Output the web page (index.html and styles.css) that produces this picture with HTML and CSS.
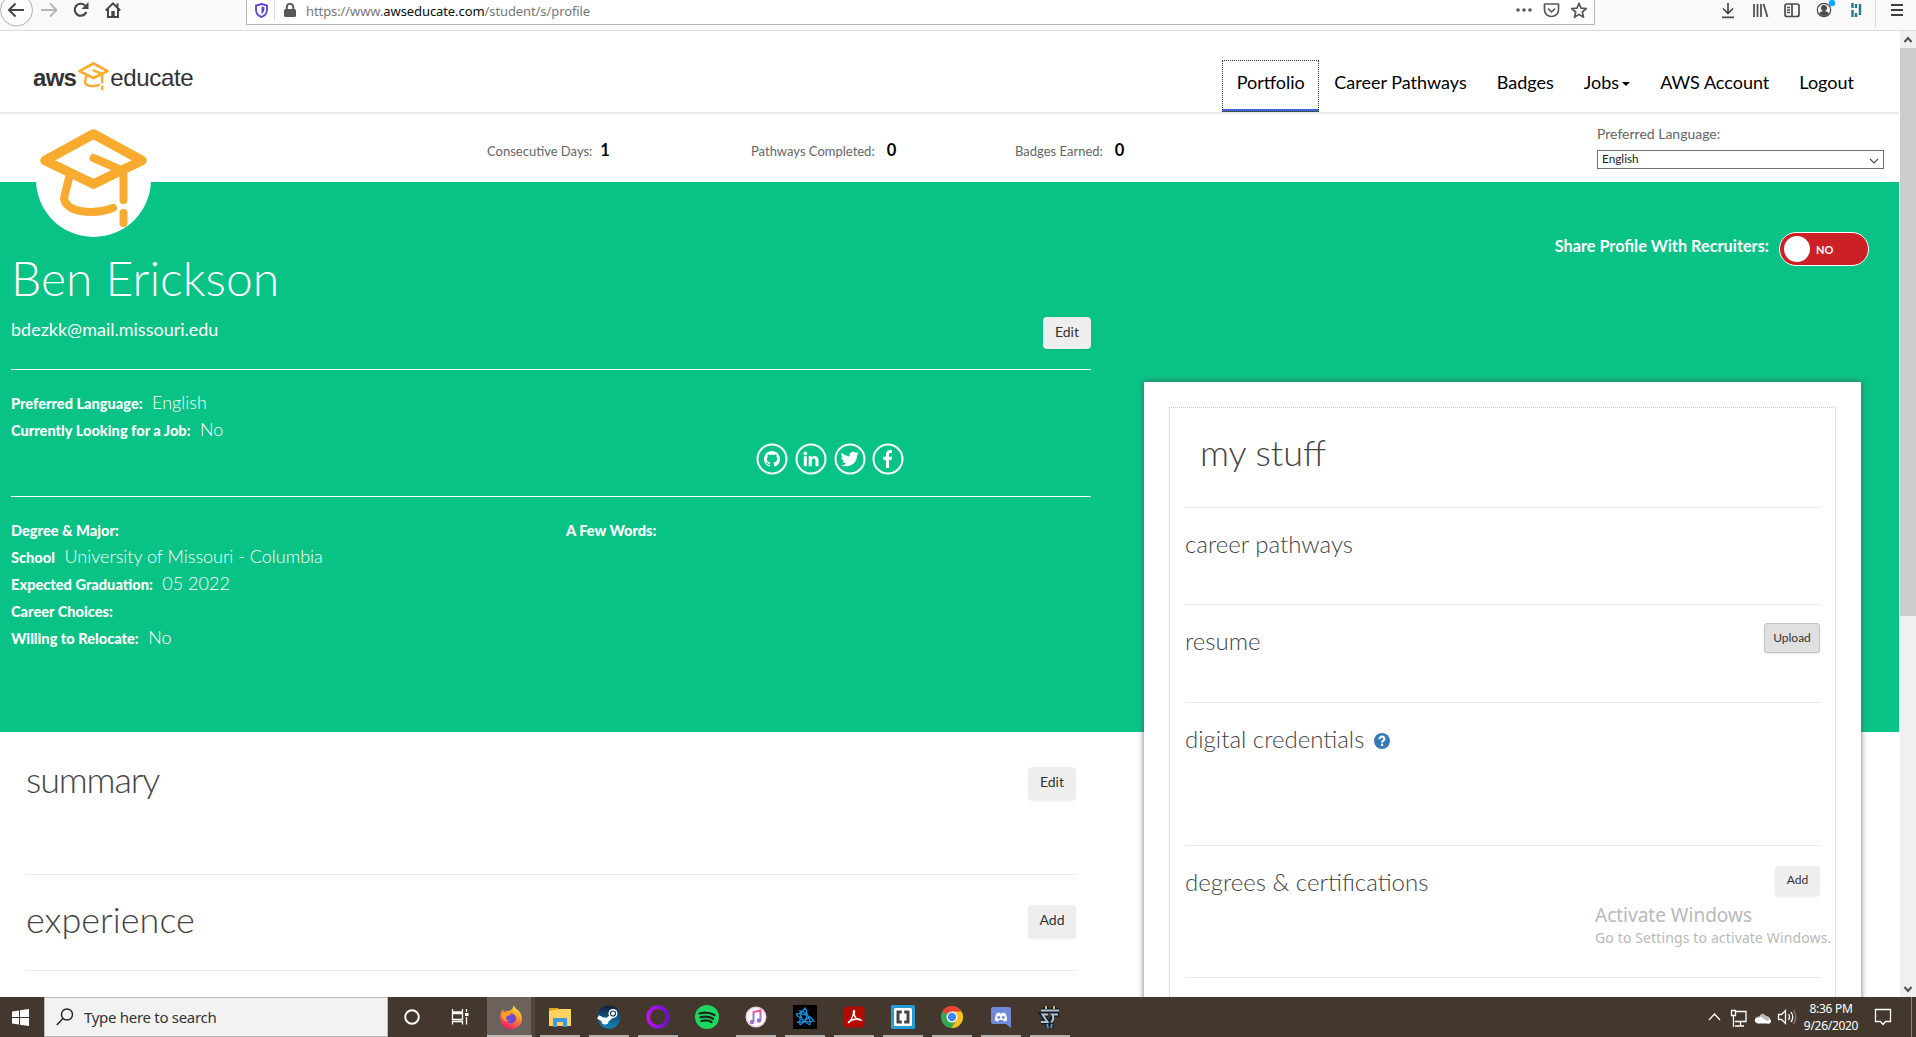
FILE: index.html
```html
<!DOCTYPE html>
<html lang="en">
<head>
<meta charset="utf-8">
<title>AWS Educate - Profile</title>
<link rel="stylesheet" href="styles.css">
</head>
<body>
<svg class="defs" aria-hidden="true">
  <symbol id="cap" viewBox="0 0 107 100">
    <g fill="none" stroke="#f8ab2e" stroke-linecap="round" stroke-linejoin="round">
      <path stroke-width="9.5" d="M53.5 5 5 31.500 53.500 55 102 31.500Z"/>
      <path stroke-width="8" d="M53.500 29 83.500 42V71M83.500 84V94"/>
      <path stroke-width="8" d="M30 45 24 69C26 84 54 86 73 79"/>
    </g>
  </symbol>
</svg>

<header class="chrome">
  <div class="nav-tools">
    <svg class="back" width="34" height="30" viewBox="0 0 34 30"><circle cx="16.500" cy="10" r="16" fill="#fdfdfd" stroke="#b0b0b2"/><path d="M24 10H9M15.500 3.500 9 10l6.500 6.500" fill="none" stroke="#45454a" stroke-width="2"/></svg>
    <svg width="16" height="20" viewBox="0 0 16 20"><path d="M0 10h15M9 3.500 15.500 10 9 16.500" fill="none" stroke="#b6b6b8" stroke-width="2"/></svg>
    <svg width="16" height="20" viewBox="0 0 16 20"><path d="M13.300 12A6 6 0 1 1 12 5.500" fill="none" stroke="#45454a" stroke-width="2.200"/><path d="M15.500 2v7h-7z" fill="#45454a"/></svg>
    <svg width="16" height="20" viewBox="0 0 16 20"><path d="M.8 10.500 8 3.300l7.200 7.200M3 9v8h10V9M12.500 7V3.500" fill="none" stroke="#45454a" stroke-width="2"/><path d="M6.300 11h3.400v6H6.300z" fill="#45454a"/></svg>
  </div>
  <div class="urlbar">
    <svg width="13" height="15" viewBox="0 0 13 15"><path d="M6.500 1 12 2.500v4C12 10 9.500 13 6.500 14 3.500 13 1 10 1 6.500v-4z" fill="#fff" stroke="#6048d8" stroke-width="1.900"/><path d="M6.500 3.500 9.500 4.300C9.600 8 8.500 10 6.500 11z" fill="#5b45d8"/></svg>
    <i class="divider"></i>
    <svg width="12" height="14" viewBox="0 0 12 14"><rect y="6" width="12" height="8" rx="1.500" fill="#58585a"/><path d="M2.800 7V4a3.200 3.200 0 0 1 6.400 0v3" fill="none" stroke="#58585a" stroke-width="2"/></svg>
    <span class="url">https://www.<b>awseducate.com</b>/student/s/profile</span>
    <svg class="page-actions" width="74" height="20" viewBox="0 0 74 20"><g fill="#58585a"><circle cx="3" cy="10" r="1.800"/><circle cx="9" cy="10" r="1.800"/><circle cx="15" cy="10" r="1.800"/></g><path d="M29.500 4h14v6a7 6.500 0 0 1-14 0zM33 8.500l3.500 3.500L40 8.500M64 3.200l2 4.900 5.300.4-4 3.500 1.200 5.200-4.500-2.800-4.500 2.800 1.200-5.200-4-3.500 5.300-.4z" fill="none" stroke="#58585a" stroke-width="1.700" stroke-linejoin="round"/></svg>
  </div>
  <svg class="ext" width="192" height="30" viewBox="0 0 192 30">
    <g fill="none" stroke="#4a4a4f" stroke-width="1.700"><path d="M8 3v10M3 8.500 8 13.500l5-5M2 17.300h12M34 4v13M37.500 4v13M41 4v13M43.500 4l4 13"/><rect x="65" y="4" width="14" height="12.500" rx="2"/><path d="M72 4v13M67 7.500h3M67 10h3M67 12.500h3"/><circle cx="104" cy="10" r="6.700" stroke-width="1.200"/></g>
    <circle cx="104" cy="8" r="3" fill="#4a4a4f"/><path d="M99 14c1-4 9-4 10 0q-5 4-10 0" fill="#4a4a4f"/>
    <circle cx="112" cy="3" r="3.200" fill="#00a8ff"/>
    <path d="M132.500 3v5M132.500 10v7M136 4v4M136 13v4M140 4v11" stroke="#277a8c" stroke-width="2.400"/>
    <path d="M155.500 0v27" stroke="#d7d7d8"/><path d="M171 5h12M171 10h12M171 15h12" stroke="#3f3f43" stroke-width="2"/>
  </svg>
</header>

<div class="viewport">
  <div class="page">
    <header class="site">
      <div class="logo"><b>aws</b><svg width="37" height="29"><use href="#cap"/></svg><span>educate</span></div>
      <nav>
        <a class="active">Portfolio</a><a>Career Pathways</a><a>Badges</a><a>Jobs<i class="caret"></i></a><a>AWS Account</a><a>Logout</a>
      </nav>
    </header>
    <section class="stats">
      <div class="avatar"><svg width="107" height="100"><use href="#cap"/></svg></div>
      <div class="stat">Consecutive Days:<b>1</b></div>
      <div class="stat">Pathways Completed:<b class="wide">0</b></div>
      <div class="stat">Badges Earned:<b class="wide">0</b></div>
      <div class="lang">
        <label>Preferred Language:</label>
        <div class="select">English<svg width="10" height="6" viewBox="0 0 10 6"><path d="M1 .8 5 4.800 9 .8" fill="none" stroke="#444" stroke-width="1.200"/></svg></div>
      </div>
    </section>
    <section class="hero">
      <div class="profile">
        <h1>Ben Erickson</h1>
        <div class="mail-row"><span>bdezkk@mail.missouri.edu</span><button>Edit</button></div>
        <div class="prefs">
          <p><b>Preferred Language:</b>English</p>
          <p><b>Currently Looking for a Job:</b>No</p>
          <div class="social">
            <svg viewBox="0 0 32 32"><circle cx="16" cy="16" r="14.500"/><path class="f" transform="translate(8 8)" d="M8 0C3.580 0 0 3.580 0 8c0 3.540 2.290 6.530 5.470 7.590.4.070.55-.17.55-.38 0-.19-.01-.82-.01-1.490-2.010.37-2.530-.49-2.690-.94-.09-.23-.48-.94-.82-1.130-.28-.15-.68-.52-.01-.53.63-.01 1.080.58 1.230.82.72 1.210 1.870.87 2.330.66.070-.52.28-.87.51-1.070-1.780-.2-3.640-.89-3.640-3.950 0-.87.31-1.590.82-2.150-.08-.2-.36-1.020.08-2.120 0 0 .67-.21 2.200.82.64-.18 1.320-.27 2-.27.68 0 1.360.09 2 .27 1.530-1.040 2.200-.82 2.200-.82.44 1.100.16 1.920.08 2.120.51.56.82 1.270.82 2.150 0 3.070-1.870 3.750-3.650 3.950.29.25.54.73.54 1.480 0 1.070-.01 1.930-.01 2.200 0 .21.15.46.55.38A8.013 8.013 0 0 0 16 8c0-4.420-3.580-8-8-8z"/></svg>
            <svg viewBox="0 0 32 32"><circle cx="16" cy="16" r="14.500"/><g class="f"><circle cx="10.300" cy="10.300" r="1.900"/><path d="M8.800 13.200h3v10h-3zM13.700 13.200h3v1.500c1.500-2.800 6.800-2.300 6.800 2.400v6.100h-3v-5.500c0-3-3.700-2.700-3.700.1v5.400h-3.100z"/></g></svg>
            <svg viewBox="0 0 32 32"><circle cx="16" cy="16" r="14.500"/><path class="f" d="M25 10.200l-2 2.200c.2 8-8.400 13.400-16 9.500 2 .1 3.900-.4 5.200-1.500-1.700-.1-2.900-1-3.400-2.500h1.500c-1.700-.5-2.900-1.900-2.900-3.700l1.600.4c-1.600-1.200-2-3.300-1.100-5 2.100 2.500 4.500 3.700 7.700 3.900-.6-4.500 3.700-6 6.200-3.700l2.400-.9-1.500 1.900z"/></svg>
            <svg viewBox="0 0 32 32"><circle cx="16" cy="16" r="14.500"/><path class="f" d="M14 25v-8h-2.700v-3.200H14v-2.300C14 8 16 6.500 20 7.200V10h-1.600c-1.100 0-1.400.6-1.400 1.600v2.200h3l-.4 3.200H17v8z"/></svg>
          </div>
        </div>
        <div class="details">
          <div>
            <p><b>Degree &amp; Major:</b></p>
            <p><b>School</b>University of Missouri - Columbia</p>
            <p><b>Expected Graduation:</b>05 2022</p>
            <p><b>Career Choices:</b></p>
            <p><b>Willing to Relocate:</b>No</p>
          </div>
          <p><b>A Few Words:</b></p>
        </div>
      </div>
      <div class="share"><span class="share-label">Share Profile With Recruiters:</span><span class="toggle"><i></i>NO</span></div>
    </section>
    <section class="sections">
      <div class="row summary"><h2>summary</h2><button>Edit</button></div>
      <div class="row experience"><h2>experience</h2><button>Add</button></div>
    </section>
    <aside class="card">
      <div class="card-inner">
        <h2>my stuff</h2>
        <div class="item h97"><h3>career pathways</h3></div>
        <div class="item h98"><h3>resume</h3><button class="small upload">Upload</button></div>
        <div class="item h143"><h3>digital credentials</h3><svg width="16" height="16" viewBox="0 0 16 16"><circle cx="8" cy="8" r="8" fill="#337ab7"/><path d="M5.500 6.200C5.500 2.700 10.600 3 10.400 6c-.1 1.600-2.300 1.500-2.300 3.400" fill="none" stroke="#fff" stroke-width="2.200"/><path d="M7 10.700h2.200v2.200H7z" fill="#fff"/></svg></div>
        <div class="item h132"><h3>degrees &amp; certifications</h3><button class="small">Add</button></div>
        <div class="item"></div>
      </div>
    </aside>
  </div>
  <div class="scrollbar">
    <svg width="16" height="17" viewBox="0 0 16 17"><path d="M4.500 11 8 7l3.500 4" fill="none" stroke="#505050" stroke-width="2"/></svg>
    <i></i>
    <svg width="16" height="17" viewBox="0 0 16 17"><path d="M4.500 7 8 11l3.500-4" fill="none" stroke="#505050" stroke-width="2"/></svg>
  </div>
  <div class="watermark"><p>Activate Windows</p><small>Go to Settings to activate Windows.</small></div>
</div>

<footer class="taskbar">
  <div class="start"><svg width="17" height="17" viewBox="0 0 17 17"><path fill="#fff" d="M0 2.500 7 1.500V8H0zM8 1.300 17 0v8H8zM0 9h7v6.500l-7-1zM8 9h9v8l-9-1.300z"/></svg></div>
  <div class="search"><svg width="18" height="18" viewBox="0 0 18 18"><circle cx="11" cy="6.500" r="5.500" fill="none" stroke="#222" stroke-width="1.400"/><path d="M7 10.500.8 17" stroke="#222" stroke-width="1.500"/></svg>Type here to search</div>
  <div class="task plain"><svg viewBox="0 0 28 28"><circle cx="14" cy="14" r="6.800" fill="none" stroke="#fff" stroke-width="2"/></svg></div>
  <div class="task plain"><svg viewBox="0 0 28 28"><path d="M6.500 6v3h10V6M6.500 21.500v-3h10v3M6.500 10.500h10v6h-10zM20.500 6v3M20.500 14v7.500" fill="none" stroke="#fff" stroke-width="1.300"/><path d="M19 10h3.500v3H19z" fill="#fff"/></svg></div>
  <div class="task open current"><svg viewBox="0 0 28 28"><defs><linearGradient id="ff" x1=".8" y1="0" x2=".3" y2="1"><stop stop-color="#fff04a"/><stop offset=".45" stop-color="#ff9329"/><stop offset="1" stop-color="#f5156c"/></linearGradient></defs><path fill="url(#ff)" d="M17 2c0 3 3 4 5 6 7 9 1 18-8 18C6 26 1 19 4 9l2-3 1 3c2-1 3-1 5-1 3-1 4-3 5-6"/><circle cx="14" cy="15.500" r="5" fill="#7048d6"/><path d="M4 11c4-3 8-2 10 1l-4 1c-2 2-1 4 2 5-4 1-8-2-8-7" fill="#ff9c2a"/></svg></div>
  <div class="task open"><svg viewBox="0 0 28 28"><path fill="#e2a313" d="M3 5h9l2 3H3z"/><path fill="#ffd35f" d="M3 8l11-2h11v17H3z"/><path fill="#3f97dc" d="M7 15h14v9h-4v-5h-6v5H7z"/></svg></div>
  <div class="task open"><svg viewBox="0 0 28 28"><defs><linearGradient id="st" x2="0" y2="1"><stop stop-color="#111d3d"/><stop offset="1" stop-color="#1388c0"/></linearGradient></defs><circle cx="14" cy="14" r="11.500" fill="url(#st)"/><path d="M3 14l8 4 7-6" stroke="#fff" stroke-width="4" fill="none"/><circle cx="10" cy="18" r="3.500" fill="#fff"/><circle cx="18" cy="10.500" r="4.500" fill="#fff"/><circle cx="18" cy="10.500" r="2.500" fill="none" stroke="#1d345c" stroke-width="1.200"/></svg></div>
  <div class="task open"><svg viewBox="0 0 28 28"><defs><linearGradient id="op"><stop stop-color="#bd13ed"/><stop offset="1" stop-color="#6812c9"/></linearGradient></defs><circle cx="14" cy="14" r="9.800" fill="none" stroke="url(#op)" stroke-width="3.700"/></svg></div>
  <div class="task"><svg viewBox="0 0 28 28"><circle cx="14" cy="14" r="12" fill="#1ed760"/><path d="M6.500 10.500q8-2.500 15 1.500M7.500 14.300q7-2 12.500 1.500M8.500 18q6-1.500 10 1" fill="none" stroke="#20241f" stroke-width="2.200" stroke-linecap="round"/></svg></div>
  <div class="task open"><svg viewBox="0 0 28 28"><defs><linearGradient id="it" x2="0" y2="1"><stop stop-color="#f3509a"/><stop offset="1" stop-color="#48a8ee"/></linearGradient></defs><circle cx="14" cy="14" r="9.700" fill="#fff" stroke="#ecd0e4" stroke-width="1.600"/><path d="M11.500 19V9l7-1.500v10" fill="none" stroke="url(#it)" stroke-width="2"/><g fill="#a56bd4"><circle cx="10" cy="19" r="2.200"/><circle cx="17" cy="17.500" r="2.200"/></g></svg></div>
  <div class="task open"><svg viewBox="0 0 28 28"><path d="M2 2h24v24H2z"/><g fill="none" stroke="#168ed8" stroke-width="1.300"><path d="M5 11c5-1 14 1 18 7-6 2-13 0-18-7M9 22C8 14 11 7 14 5c4 5 2 13-5 17M19 22C13 20 9 14 9 8c6 0 11 7 10 14M6 19c4 1 9-1 12-5"/></g></svg></div>
  <div class="task open"><svg viewBox="0 0 28 28"><rect x="3.500" y="3.500" width="21" height="21" rx="3.500" fill="#b30b00"/><path d="M8 20c3-2 6-8 5.500-12 1-1.500 1.500 1 .5 3 1 4 4 6 7 6-2-2-10-1-13 3" fill="none" stroke="#fff" stroke-width="1.400"/></svg></div>
  <div class="task open"><svg viewBox="0 0 28 28"><rect x="2" y="2" width="24" height="24" rx="1.500" fill="#279bd9"/><rect x="5" y="5" width="18" height="18" rx="1.500" fill="#fff"/><path d="M12.800 9H9v10h3.800M15.200 9H19v10h-3.800" fill="none" stroke="#444" stroke-width="3"/></svg></div>
  <div class="task open"><svg viewBox="0 0 28 28"><circle cx="14" cy="14" r="11" fill="#35a853"/><path d="M14 14 4.500 8.500A11 11 0 0 1 23.500 8.500z" fill="#ea4335"/><path d="M4.500 8.500A11 11 0 0 1 14 3v6z" fill="#ea4335"/><path d="M14 8.500h9.500A11 11 0 0 1 13.500 25L19 16z" fill="#fbc116"/><circle cx="14" cy="14" r="5.500" fill="#fff"/><circle cx="14" cy="14" r="4.200" fill="#4285f4"/></svg></div>
  <div class="task open"><svg viewBox="0 0 28 28"><path d="M6.500 4h15A2.500 2.500 0 0 1 24 6.500V25l-5-4H6.500A2.500 2.500 0 0 1 4 18.500v-12A2.500 2.500 0 0 1 6.500 4" fill="#7289da"/><path d="M8 17.500c0-3 .5-5 1.500-7 1.500-1 3-1 3-1l.5 1h2l.5-1s1.500 0 3 1c1 2 1.500 4 1.500 7-1.500 1-3 1-3 1l-1-1.500h-4L11 18.500s-1.500 0-3-1" fill="#fff"/><circle cx="11.700" cy="14.500" r="1.400" fill="#7289da"/><circle cx="16.300" cy="14.500" r="1.400" fill="#7289da"/></svg></div>
  <div class="task open"><svg viewBox="0 0 28 28"><g fill="none" stroke="#141c28" stroke-width="4.500"><path d="M5 7.500h18M12 11.500H6l6 7.500H5M23 11.500h-6l-2 9M10 3v4M18 3v4M11 21l1 4M16 21l-1 4"/></g><g fill="none" stroke="#a9c4cf" stroke-width="2"><path d="M5 7.500h18M12 11.500H6.500l5 7.500H5M22 11.500h-6q3 4-1 8"/><path d="M10 3v3M18 3v3" stroke="#d8ba6b"/><path d="M11 21l1 4M16 21l-1 4" stroke="#5e8fb0"/></g></svg></div>
  <div class="tray">
    <svg width="114" height="24" viewBox="0 0 114 24"><g fill="none" stroke="#fff" stroke-width="1.300"><path d="M9 15l5.500-6 5.500 6M35 6.500h11v10H35M40.500 17v4M35 21h9M31.500 5.500h4v5h-4zM33.500 10.500V22"/><path d="M78.500 9.500h3l4-4v13l-4-4h-3zM88.500 9q2 3 0 6M91 7q3.500 5 0 10"/><path d="M93.500 5q4.500 7 0 14" stroke="#8a817a"/></g><path d="M58 18.500q-4-1-3-4c1-3 4-2 4-2q3-6 7-1c3-.5 4 2 5 4q0 4-4 3z" fill="#fff"/><path d="M55 13q3-3 6-1l6 4 3-2q-1-3-4-3-4-5-7 1-3-1-4 1" fill="#bdb9b5"/></svg>
    <div class="clock">8:36 PM<br>9/26/2020</div>
    <svg class="note" width="18" height="18" viewBox="0 0 18 18"><path d="M1.500 1.500h15v12h-5l-2.500 3-2.500-3h-5z" fill="none" stroke="#fff" stroke-width="1.300"/></svg>
    <i class="peek"></i>
  </div>
</footer>
</body>
</html>
```
FILE: styles.css
```css
* { box-sizing: border-box; }
body { margin: 0; width: 1916px; height: 1037px; overflow: hidden; display: flex; flex-direction: column; font-family: Lato, "Open Sans", sans-serif; color: #000; background: #fff; }
h1, h2, h3, p { margin: 0; font-weight: 300; }
svg { display: block; flex: none; }
.defs { position: absolute; width: 0; height: 0; }

/* browser toolbar */
.chrome { height: 31px; flex: none; display: flex; align-items: flex-start; background: #f9f9fa; border-bottom: 1px solid #dcdcde; }
.nav-tools { width: 246px; flex: none; display: flex; }
.nav-tools svg { margin-right: 16px; }
.nav-tools .back { margin-right: 7px; }
.urlbar { width: 1349px; height: 25px; display: flex; align-items: flex-start; background: #fff; border: 1px solid #b9b9bb; border-top: 0; font: 13px/22px "Noto Sans", sans-serif; color: #77777a; padding-left: 8px; }
.urlbar > svg { margin-top: 3px; }
.urlbar > .page-actions { margin: 0 5px 0 auto; }
.divider { width: 1px; height: 21px; background: #ddd; margin: 0 9px 0 6px; }
.url { margin-left: 10px; letter-spacing: -.09px; white-space: nowrap; }
.url b { font-weight: 400; color: #0c0c0d; }
.ext { margin-left: 125px; }

/* page area */
.viewport { flex: 1; min-height: 0; display: flex; position: relative; }
.page { width: 1900px; flex: none; position: relative; overflow: hidden; padding-right: 1px; }
.site { height: 83px; border-bottom: 2px solid #e9e9e9; display: flex; justify-content: space-between; padding: 29px 30px 0 33px; }
.logo { display: flex; height: 30px; margin-top: 2px; font: 24px/31px "Liberation Sans", Arial, sans-serif; color: #333; }
.logo b { letter-spacing: -.7px; }
.logo span { letter-spacing: -.35px; }
.logo svg { margin: 0 -2px 0 -1px; }
nav { display: flex; height: 52px; font-size: 18px; line-height: 44px; }
nav a { padding: 0 15px; white-space: nowrap; }
nav .active { outline: 1px dotted #333; outline-offset: -1px; border-bottom: 3px solid #3a63d8; padding: 0 14.5px; }
.caret { display: inline-block; border: 4px solid transparent; border-top-color: #000; border-bottom: 0; margin-left: 3px; vertical-align: 3px; }
.stats { height: 68px; display: flex; padding-left: 487px; position: relative; font-size: 13px; line-height: 73px; color: #666; }
.stat { width: 264px; white-space: nowrap; }
.stat b { font-size: 16.5px; color: #000; margin-left: 8px; }
.stat b.wide { margin-left: 12px; }
.avatar { position: absolute; left: 36px; top: 8px; width: 115px; height: 115px; border-radius: 50%; background: #fff; z-index: 2; }
.avatar svg { margin: 7px 0 0 4px; }
.lang { width: 287px; margin-left: 318px; font-size: 14px; line-height: 20px; padding-top: 10px; }
.lang label { display: block; height: 26px; }
.select { height: 19px; border: 1px solid #707070; display: flex; justify-content: space-between; padding: 0 4px; font-size: 11.8px; line-height: 16px; color: #222; }
.select svg { margin-top: 7px; }
.hero { height: 550px; background: #09c286; color: #fff; display: flex; justify-content: space-between; padding: 0 30px 0 11px; }
.profile { width: 1080px; padding-top: 67px; }
h1 { font-size: 48px; line-height: 58px; }
.mail-row { height: 63px; border-bottom: 1px solid #fff; display: flex; justify-content: space-between; font-size: 18px; line-height: 44px; }
button { width: 48px; height: 33px; padding: 0 0 3px; border: 0; border-radius: 4px; background: #eee; color: #333; font: 14px/30px Lato, sans-serif; box-shadow: 0 1px 2px rgba(0,0,0,.08); }
.mail-row button { margin-top: 10px; height: 32px; }
.prefs { height: 127px; border-bottom: 1px solid #fff; padding-top: 19px; }
.hero p { height: 27px; font-size: 18px; line-height: 27px; white-space: nowrap; }
.hero p b { font-size: 14.6px; font-weight: 900; margin-right: 9.5px; }
.social { display: flex; gap: 6.8px; margin: 0 0 0 745px; }
.social svg { width: 32px; height: 32px; }
.social circle { fill: none; stroke: #fff; stroke-width: 2; }
.social .f, .social .f circle { fill: #fff; stroke: none; }
.details { display: grid; grid-template-columns: 555px 1fr; padding-top: 19px; }
.share { display: flex; padding-top: 50px; font-weight: 700; gap: 10px; }
.share-label { font-size: 16.3px; line-height: 28px; }
.toggle { width: 90px; height: 34px; border: 1px solid #fff; border-radius: 17px; background: #cb2026; display: flex; align-items: center; gap: 6px; padding-left: 4px; font-size: 11px; }
.toggle i { width: 26px; height: 26px; border-radius: 50%; background: #fff; }
h2 { font-size: 36px; color: #444; line-height: 44px; }
.sections { width: 1050px; margin-left: 26px; }
.row { display: flex; justify-content: space-between; border-bottom: 1px solid #eaeaea; }
.summary { height: 143px; padding-top: 25px; }
.summary h2 { letter-spacing: -1.15px; }
.experience { height: 96px; padding-top: 22px; }
.row button { margin-top: 8px; }
.summary button { margin-top: 10px; }
.card { position: absolute; left: 1144px; top: 351px; width: 717px; height: 720px; padding: 25px; background: #fff; box-shadow: 0 0 6px rgba(80,80,80,.8); }
.card-inner { height: 680px; border: 1px dotted #ccc; padding: 0 15px; }
.card h2 { height: 99px; padding: 22px 0 0 15px; }
.item { display: flex; justify-content: space-between; border-top: 1px solid #eaeaea; padding-top: 20px; }
.h97 { height: 97px; }
.h98 { height: 98px; }
.h143 { height: 143px; justify-content: flex-start; gap: 10px; }
.h132 { height: 132px; }
h3 { font-size: 24px; line-height: 32px; color: #444; }
.item svg { margin-top: 10px; }
.small { width: 45px; height: 30px; font-size: 12px; line-height: 28px; padding-bottom: 2px; margin-top: 0; }
.small.upload { width: 56px; height: 30px; padding-bottom: 1px; background: #e0e0e0; border: 1px solid #c4c4c4; border-radius: 3px; margin-top: -2px; }
.scrollbar { width: 16px; background: #f0f0f0; display: flex; flex-direction: column; }
.scrollbar i { height: 568px; background: #cdcdcd; margin-bottom: auto; }
.watermark { position: absolute; left: 1595px; top: 871px; font-family: "Noto Sans", sans-serif; color: #b9b9b9; white-space: nowrap; }
.watermark p { font-size: 19px; line-height: 27px; font-weight: 400; }
.watermark small { display: block; font-size: 14px; line-height: 18px; letter-spacing: .13px; }

/* taskbar */
.taskbar { height: 40px; flex: none; display: flex; background: #44382e; color: #fff; font-family: "Noto Sans", sans-serif; }
.start { width: 44px; padding: 12px 0 0 12px; }
.search { width: 344px; background: #f2f2f2; border: 1px solid #bbb; display: flex; align-items: center; gap: 10px; padding-left: 11px; color: #333; font-size: 15px; letter-spacing: -.3px; }
.task { width: 49px; padding: 6px 0 0 10px; }
.task.plain { width: 48px; padding-left: 9.5px; }
.task svg { width: 28px; height: 28px; }
.task.open { background: linear-gradient(#b5b2af, #b5b2af) 4px 38px / 40px 2px no-repeat; }
.task.current { margin-left: 3px; background: linear-gradient(#bcb9b6, #bcb9b6) 0 38px / 45px 2px no-repeat, linear-gradient(90deg, #6b625b 44px, #50463e 44px) 0 0 / 48px 40px no-repeat; }
.tray { margin-left: auto; display: flex; align-items: center; width: 216px; }
.clock { width: 60px; text-align: center; font-size: 12px; line-height: 17px; letter-spacing: -.3px; margin-left: -13px; }
.note { margin-left: 13px; }
.peek { width: 1px; height: 40px; margin-left: 19px; background: #8c857f; }
```
